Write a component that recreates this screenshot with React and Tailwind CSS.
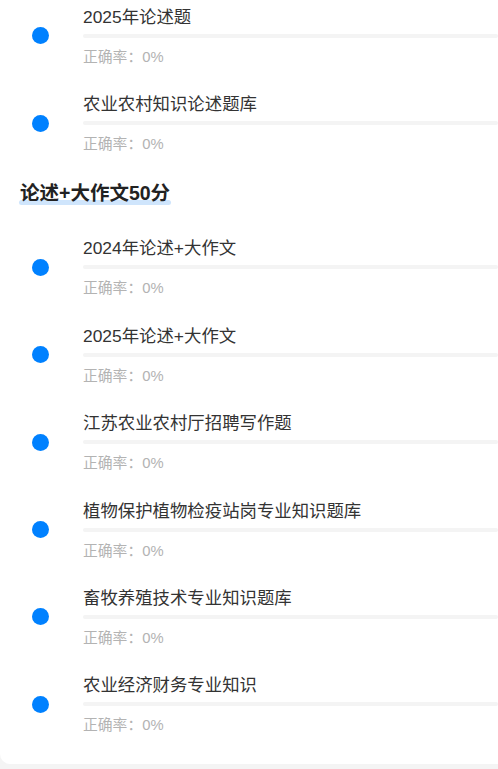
const groups = [
  {
    title: null,
    items: ['2025年论述题', '农业农村知识论述题库'],
  },
  {
    title: '论述+大作文50分',
    items: [
      '2024年论述+大作文',
      '2025年论述+大作文',
      '江苏农业农村厅招聘写作题',
      '植物保护植物检疫站岗专业知识题库',
      '畜牧养殖技术专业知识题库',
      '农业经济财务专业知识',
    ],
  },
];

function BankItem({ name, rate }) {
  return (
    <div className="flex items-center py-[12.7px]">
      <div className="ml-[32px] w-[17px] h-[17px] shrink-0 rounded-full bg-[#0081ff]" />
      <div className="ml-[34px] flex-1 min-w-0">
        <div className="text-[17.4px] leading-[24px] text-[#333333] truncate">{name}</div>
        <div className="mt-[5px] h-[4px] rounded-full bg-[#f4f4f4]" />
        <div className="mt-[9px] text-[14.8px] leading-[20px] text-[#b3b3b3]">正确率：{rate}%</div>
      </div>
    </div>
  );
}

export default function App() {
  return (
    <div
      className="min-h-[769px] bg-[#f4f4f4] overflow-hidden"
      style={{ fontFamily: '"Liberation Sans", "Noto Sans CJK SC", sans-serif' }}
    >
      <div className="bg-white rounded-bl-[10px] -mt-[8px] pb-[16px]">
        {groups.map((g, i) => (
          <div key={i}>
            {g.title && (
              <div className="pl-[20px] pt-[12px] pb-[17px]">
                <span className="relative inline-block text-[19.5px] leading-[28px] font-bold text-[#222222]">
                  <span className="absolute left-[-1px] right-[-1px] bottom-[2px] h-[5px] rounded-full bg-[#cfe5fc]" />
                  <span className="relative">{g.title}</span>
                </span>
              </div>
            )}
            {g.items.map((name) => (
              <BankItem key={name} name={name} rate={0} />
            ))}
          </div>
        ))}
      </div>
    </div>
  );
}
